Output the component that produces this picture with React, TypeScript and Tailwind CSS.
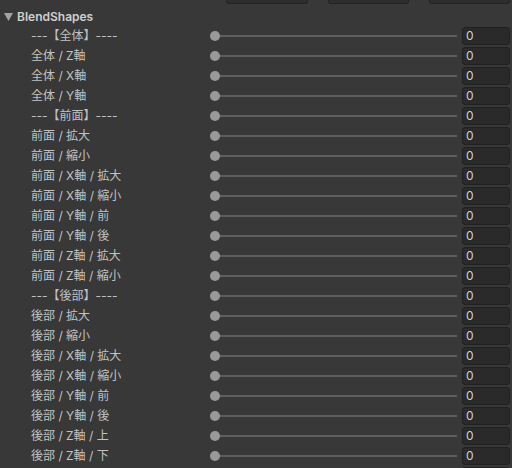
import React from 'react';

const rows = [
  '---【全体】----',
  '全体 / Z軸',
  '全体 / X軸',
  '全体 / Y軸',
  '---【前面】----',
  '前面 / 拡大',
  '前面 / 縮小',
  '前面 / X軸 / 拡大',
  '前面 / X軸 / 縮小',
  '前面 / Y軸 / 前',
  '前面 / Y軸 / 後',
  '前面 / Z軸 / 拡大',
  '前面 / Z軸 / 縮小',
  '---【後部】----',
  '後部 / 拡大',
  '後部 / 縮小',
  '後部 / X軸 / 拡大',
  '後部 / X軸 / 縮小',
  '後部 / Y軸 / 前',
  '後部 / Y軸 / 後',
  '後部 / Z軸 / 上',
  '後部 / Z軸 / 下',
];

function Row({ label, value }: { label: string; value: string }) {
  return (
    <div className="flex items-center h-[20px] pl-[31px] pr-[2px] shrink-0">
      <div className="w-[179px] text-[12px] text-[#c2c2c2] whitespace-nowrap leading-none">{label}</div>
      <div className="relative flex-1 h-[10px]">
        <div className="absolute left-[5px] right-0 top-[4px] h-[2px] bg-[#5e5e5e]" />
        <div className="absolute left-0 top-0 w-[10px] h-[10px] rounded-full bg-[#999999]" />
      </div>
      <div className="ml-[5px] w-[48px] h-[18px] rounded-[3px] bg-[#2a2a2a] border border-[#212121] flex items-center pl-[3px] text-[12px] text-[#d2d2d2] leading-none">
        {value}
      </div>
    </div>
  );
}

export default function App() {
  return (
    <div
      className="w-[512px] h-[468px] overflow-hidden bg-[#383838] flex flex-col"
      style={{ fontFamily: 'Inter, "Noto Sans CJK JP", sans-serif' }}
    >
      <div className="h-[4px] shrink-0 flex">
        <div className="ml-[226px] w-[82px] h-[4px] rounded-b-[3px] bg-[#2d2d2d] border border-t-0 border-[#232323]" />
        <div className="ml-[20px] w-[81px] h-[4px] rounded-b-[3px] bg-[#2d2d2d] border border-t-0 border-[#232323]" />
        <div className="ml-[20px] w-[81px] h-[4px] rounded-b-[3px] bg-[#2d2d2d] border border-t-0 border-[#232323]" />
      </div>
      <div className="h-[22px] shrink-0 flex items-center pl-[4px] pt-[3px] gap-[4px]">
        <svg width="9" height="8" viewBox="0 0 9 8">
          <polygon points="0,0 9,0 4.5,8" fill="#a3a3a3" />
        </svg>
        <span className="text-[12px] font-semibold text-[#d0d0d0] leading-none">BlendShapes</span>
      </div>
      {rows.map((r, i) => (
        <Row key={i} label={r} value="0" />
      ))}
      <Row label="" value="" />
    </div>
  );
}
